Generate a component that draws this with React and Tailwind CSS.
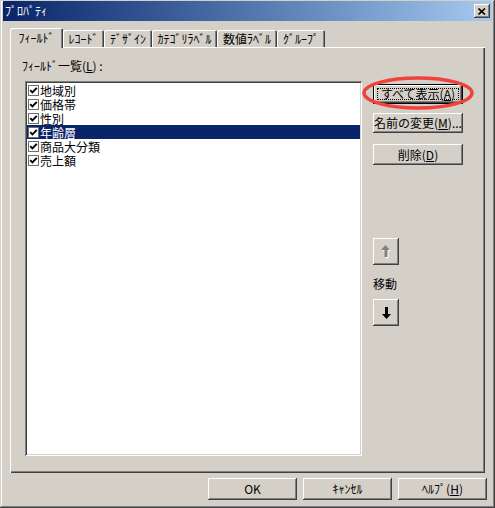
import React from "react";

const bevel =
  "shadow-[inset_-1px_-1px_#404040,inset_1px_1px_#ffffff,inset_-2px_-2px_#808080,inset_2px_2px_#d4d0c8]";

function Btn({ children, className = "" }) {
  return (
    <div
      className={`flex items-center justify-center bg-[#d4d0c8] text-[12px] leading-[14px] text-black ${bevel} ${className}`}
    >
      {children}
    </div>
  );
}

function Check() {
  return (
    <div className="flex h-[11px] w-[11px] shrink-0 items-center justify-center border border-[#6e6e6e] bg-white">
      <svg width="9" height="9" viewBox="0 0 9 9">
        <path d="M1.2 4.2 L3.4 6.4 L7.8 1.8" fill="none" stroke="#000" strokeWidth="1.9" />
      </svg>
    </div>
  );
}

const items = ["地域別", "価格帯", "性別", "年齢層", "商品大分類", "売上額"];
const tabs = [
  ["ﾚｺｰﾄﾞ", "w-[41px]"],
  ["ﾃﾞｻﾞｲﾝ", "w-[48px]"],
  ["ｶﾃｺﾞﾘﾗﾍﾞﾙ", "w-[65px]"],
  ["数値ﾗﾍﾞﾙ", "w-[60px]"],
  ["ｸﾞﾙｰﾌﾟ", "w-[48px]"],
];

export default function App() {
  return (
    <div className="relative h-[508px] w-[495px] overflow-hidden bg-[#d4d0c8] font-['Noto_Sans_CJK_JP',sans-serif] text-black shadow-[inset_-1px_-1px_#404040,inset_1px_1px_#d4d0c8,inset_-2px_-2px_#808080,inset_2px_2px_#ffffff]">
      <div className="flex h-full flex-col px-[3px] pt-[1px]">
        {/* Title bar */}
        <div className="flex h-[20px] shrink-0 items-center justify-between bg-gradient-to-r from-[#0a246a] to-[#a6caf0] pl-[2px] pr-[2px]">
          <span className="text-[12px] leading-[14px] text-white">ﾌﾟﾛﾊﾟﾃｨ</span>
          <div className={`flex h-[14px] w-[16px] items-center justify-center bg-[#d4d0c8] ${bevel}`}>
            <svg width="8" height="7" viewBox="0 0 8 7">
              <path d="M0.5 0.5 L7 6.5 M7 0.5 L0.5 6.5" stroke="#000" strokeWidth="1.6" />
            </svg>
          </div>
        </div>

        {/* Body */}
        <div className="flex flex-col px-[7px] pt-[7px]">
          {/* Tabs */}
          <div className="flex h-[19px] items-end">
            <div className="relative z-10 -mb-px flex h-[20px] w-[53px] items-start justify-center rounded-t-[2px] bg-[#d4d0c8] pt-[3px] text-[12px] leading-[14px] shadow-[inset_1px_1px_#ffffff,inset_-1px_0_#404040,inset_-2px_0_#808080]">
              ﾌｨｰﾙﾄﾞ
            </div>
            {tabs.map(([t, w]) => (
              <div
                key={t}
                className={`flex h-[17px] ${w} items-start justify-center rounded-t-[2px] bg-[#d4d0c8] pt-[2px] text-[12px] leading-[14px] shadow-[inset_1px_1px_#ffffff,inset_-1px_0_#404040,inset_-2px_0_#808080]`}
              >
                {t}
              </div>
            ))}
          </div>

          {/* Panel */}
          <div className="flex h-[426px] w-[475px] flex-col bg-[#d4d0c8] pl-[12px] pt-[12px] shadow-[inset_1px_1px_#ffffff,inset_-1px_-1px_#404040,inset_-2px_-2px_#808080]">
            <div className="text-[12px] leading-[14px]">
              ﾌｨｰﾙﾄﾞ一覧(<span className="underline">L</span>) :
            </div>
            <div className="mt-[8px] flex">
              {/* List */}
              <div className="ml-[3px] h-[375px] w-[337px] bg-white p-[2px] shadow-[inset_1px_1px_#808080,inset_-1px_-1px_#ffffff,inset_2px_2px_#404040,inset_-2px_-2px_#d4d0c8]">
                {items.map((it, i) => {
                  const sel = i === 3;
                  return (
                    <div
                      key={it}
                      className={`flex h-[14px] items-center overflow-hidden ${sel ? "bg-[#0a246a] text-white" : "text-black"}`}
                    >
                      <div className="ml-[1px] mr-[1px]">
                        <Check />
                      </div>
                      <span className="text-[12px] leading-[13px]">{it}</span>
                    </div>
                  );
                })}
              </div>

              {/* Right column */}
              <div className="ml-[11px] flex flex-col">
                <div className="mt-[3px] h-[20px] w-[90px] border border-black">
                  <Btn className="relative h-full w-full">
                    <div className="absolute inset-[3px] border border-dotted border-black" />
                    <span>
                      すべて表示(<span className="underline">A</span>)
                    </span>
                  </Btn>
                </div>
                <Btn className="mt-[9px] h-[20px] w-[90px]">
                  <span>
                    名前の変更(<span className="underline">M</span>)...
                  </span>
                </Btn>
                <Btn className="mt-[11px] h-[21px] w-[90px]">
                  <span>
                    削除(<span className="underline">D</span>)
                  </span>
                </Btn>

                <Btn className="mt-[73px] h-[27px] w-[26px]">
                  <svg width="10" height="13" viewBox="0 0 10 13">
                    <polygon points="5.5,1 10,6 7.5,6 7.5,13 4.5,13 4.5,6 1,6" fill="#ffffff" />
                    <polygon points="4.5,0 9,5 6.5,5 6.5,12 3.5,12 3.5,5 0,5" fill="#808080" />
                  </svg>
                </Btn>
                <div className="mt-[12px] text-[12px] leading-[14px]">移動</div>
                <Btn className="mt-[8px] h-[27px] w-[26px]">
                  <svg width="9" height="12" viewBox="0 0 9 12">
                    <polygon points="3,0 6,0 6,7 9,7 4.5,12 0,7 3,7" fill="#000000" />
                  </svg>
                </Btn>
              </div>
            </div>
          </div>

          {/* Bottom buttons */}
          <div className="mt-[5px] flex justify-end gap-[6px]">
            <Btn className="h-[22px] w-[89px]">OK</Btn>
            <Btn className="h-[22px] w-[89px]">ｷｬﾝｾﾙ</Btn>
            <Btn className="-mr-[2px] h-[22px] w-[89px]">
              <span>
                ﾍﾙﾌﾟ(<span className="underline">H</span>)
              </span>
            </Btn>
          </div>
        </div>
      </div>

      {/* Red annotation ellipse */}
      <svg className="pointer-events-none absolute left-0 top-0" width="495" height="508">
        <ellipse cx="418" cy="93" rx="54" ry="15" fill="none" stroke="#f0423c" strokeWidth="3.5" />
      </svg>
    </div>
  );
}
